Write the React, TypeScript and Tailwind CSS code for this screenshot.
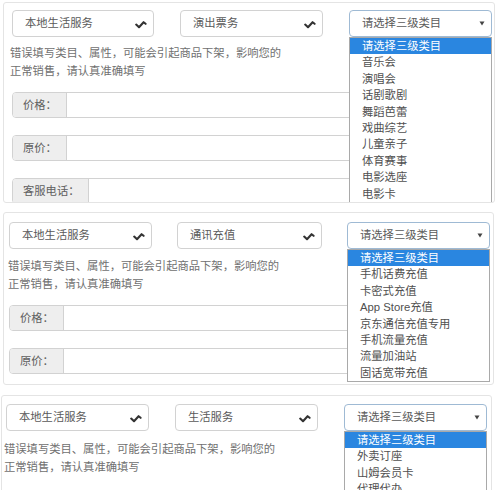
import React from "react";

const Check = () => (
  <svg width="12" height="10" viewBox="0 0 12 10" className="shrink-0">
    <path d="M1.2 5.6 L4 8.2 L8.6 3.2 L10.6 4.8" fill="none" stroke="#333" strokeWidth="2.1" strokeLinejoin="round" strokeLinecap="round" />
  </svg>
);

const Caret = () => (
  <svg width="6" height="5" viewBox="0 0 6 5" className="shrink-0">
    <path d="M0.5 0.5 L5.5 0.5 L3 4.5 Z" fill="#444" />
  </svg>
);

function SelectBox({ text, className }: { text: string; className: string }) {
  return (
    <div className={"h-[27px] border border-[#d2d2d2] rounded-[4px] bg-white flex items-center justify-between pl-[12px] pr-[6px] text-[#5a5a5a] " + className}>
      <span>{text}</span>
      <Check />
    </div>
  );
}

function Dropdown({ items, className }: { items: string[]; className: string }) {
  return (
    <div className={"relative h-[27px] " + className}>
      <div className="h-full border border-[#9fbad4] rounded-[4px] bg-white flex items-center justify-between pl-[12px] pr-[6px] text-[#5a5a5a]">
        <span>请选择三级类目</span>
        <Caret />
      </div>
      <div className="absolute left-0 right-0 top-full border border-[#a9a9a9] bg-white z-10 text-[#505050]">
        <div className="h-[16.4px] leading-[16.4px] pl-[12px] bg-[#2a86e0] text-white">请选择三级类目</div>
        {items.map((it) => (
          <div key={it} className="h-[16.4px] leading-[16.4px] pl-[12px]">{it}</div>
        ))}
      </div>
    </div>
  );
}

function InputRow({ label, labelW }: { label: string; labelW: string }) {
  return (
    <div className="flex h-[26px] border border-[#d2d2d2] rounded-[4px] bg-white overflow-hidden">
      <div className={"h-full bg-[#eeeeee] border-r border-[#d2d2d2] flex items-center pl-[10px] text-[#606060] " + labelW}>{label}</div>
      <div className="flex-1" />
    </div>
  );
}

const Desc = ({ className }: { className: string }) => (
  <div className={"text-[#707070] leading-[18px] " + className}>
    <div>错误填写类目、属性，可能会引起商品下架，影响您的</div>
    <div>正常销售，请认真准确填写</div>
  </div>
);

export default function App() {
  return (
    <div className="w-[500px] h-[490px] overflow-hidden bg-white font-['Liberation_Sans','Noto_Sans_CJK_SC',sans-serif] text-[11.3px]">
      {/* Panel 1 */}
      <div className="mt-[2px] ml-[3px] w-[492px] h-[201px] border border-[#e4e4e4] rounded-[3px] overflow-hidden pt-[7px] pl-[8px]">
        <div className="flex gap-[26px]">
          <SelectBox text="本地生活服务" className="w-[142px]" />
          <SelectBox text="演出票务" className="w-[143px]" />
          <Dropdown className="w-[143px]" items={["音乐会", "演唱会", "话剧歌剧", "舞蹈芭蕾", "戏曲综艺", "儿童亲子", "体育赛事", "电影选座", "电影卡"]} />
        </div>
        <Desc className="mt-[7px] -ml-[2px]" />
        <div className="mt-[12px] w-[480px] flex flex-col gap-[17px]">
          <InputRow label="价格：" labelW="w-[54px]" />
          <InputRow label="原价：" labelW="w-[54px]" />
          <InputRow label="客服电话：" labelW="w-[76px]" />
        </div>
      </div>

      {/* Panel 2 */}
      <div className="mt-[9px] ml-[3px] w-[491px] h-[173px] border border-[#e4e4e4] rounded-[3px] pt-[9px] pl-[5px]">
        <div className="flex gap-[25px]">
          <SelectBox text="本地生活服务" className="w-[143px]" />
          <SelectBox text="通讯充值" className="w-[145px]" />
          <Dropdown className="w-[143px]" items={["手机话费充值", "卡密式充值", "App Store充值", "京东通信充值专用", "手机流量充值", "流量加油站", "固话宽带充值"]} />
        </div>
        <Desc className="mt-[8px] -ml-[1px]" />
        <div className="mt-[12px] w-[481px] flex flex-col gap-[17px]">
          <InputRow label="价格：" labelW="w-[54px]" />
          <InputRow label="原价：" labelW="w-[54px]" />
        </div>
      </div>

      {/* Panel 3 */}
      <div className="mt-[10px] ml-[1px] w-[491px] h-[120px] border border-[#e4e4e4] rounded-[3px] pt-[8px] pl-[4px]">
        <div className="flex gap-[26px]">
          <SelectBox text="本地生活服务" className="w-[143px]" />
          <SelectBox text="生活服务" className="w-[143px]" />
          <Dropdown className="w-[143px]" items={["外卖订座", "山姆会员卡", "代理代办", "其他"]} />
        </div>
        <Desc className="mt-[9px] -ml-[2px]" />
      </div>
    </div>
  );
}
